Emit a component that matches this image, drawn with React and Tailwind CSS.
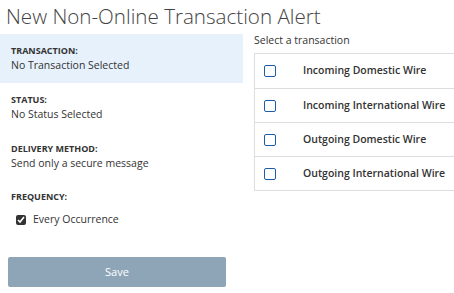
import React from 'react';

const transactions = [
  'Incoming Domestic Wire',
  'Incoming International Wire',
  'Outgoing Domestic Wire',
  'Outgoing International Wire',
];

function Field({ label, value, highlight }) {
  return (
    <div className={`h-[49px] px-[11px] pt-[10px] ${highlight ? 'bg-[#e6f1fb]' : ''}`}>
      <div className="text-[9px] font-bold uppercase leading-[14px] text-[#333]">{label}</div>
      <div className="text-[10.5px] leading-[14px] text-[#333]">{value}</div>
    </div>
  );
}

export default function App() {
  return (
    <div className="w-[454px] h-[293px] overflow-hidden bg-white font-['Open_Sans',sans-serif]">
      <h1 className="pl-[6px] pt-[1px] text-[20.6px] leading-[30px] font-light text-[#444] whitespace-nowrap">
        New Non-Online Transaction Alert
      </h1>
      <div className="mt-[3px] flex">
        <div className="w-[243px] shrink-0">
          <Field label="Transaction:" value="No Transaction Selected" highlight />
          <Field label="Status:" value="No Status Selected" />
          <Field label="Delivery Method:" value="Send only a secure message" />
          <div className="px-[11px] pt-[9px]">
            <div className="text-[9px] font-bold uppercase leading-[14px] text-[#333]">Frequency:</div>
            <label className="mt-[9px] ml-[5px] flex h-[14px] items-center gap-[7px] text-[10.5px] text-[#333]">
              <input type="checkbox" defaultChecked className="m-0 h-[10px] w-[10px] accent-[#333]" />
              Every Occurrence
            </label>
          </div>
          <button className="mt-[30px] ml-[8px] h-[30px] w-[218px] rounded-[2px] bg-[#8ea5b8] text-[11px] text-white">
            Save
          </button>
        </div>
        <div className="ml-[11px] flex-1">
          <div className="text-[10.5px] leading-[12px] text-[#333] whitespace-nowrap">Select a transaction</div>
          <div className="mt-[7px] border-t border-l border-b border-[#ddd]">
            {transactions.map((t, i) => (
              <div
                key={t}
                className={`flex h-[34px] items-center ${i > 0 ? 'border-t border-[#ddd]' : ''}`}
              >
                <span className="ml-[9px] h-[12px] w-[12px] shrink-0 rounded-[2px] border-[1.5px] border-[#1c5ca8]" />
                <span className="ml-[27px] text-[10.5px] font-semibold text-[#333] whitespace-nowrap">{t}</span>
              </div>
            ))}
          </div>
        </div>
      </div>
    </div>
  );
}
